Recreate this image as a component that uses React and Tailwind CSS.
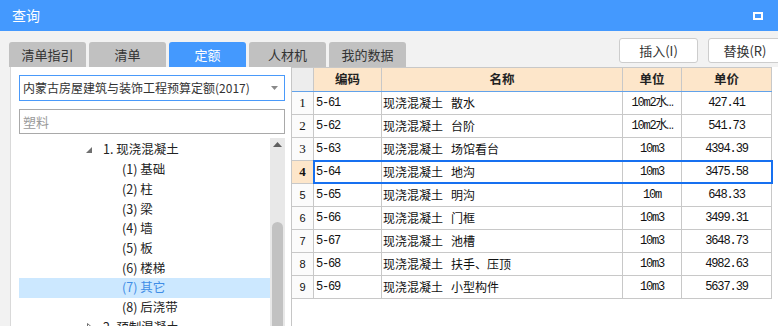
import React from 'react'

const CJK = { fontFamily: '"Noto Sans CJK SC", "Noto Sans", sans-serif' }

const tabs = ['清单指引', '清单', '定额', '人材机', '我的数据']

const tree = [
  { label: '1. 现浇混凝土', level: 0, open: true },
  { label: '(1) 基础', level: 1 },
  { label: '(2) 柱', level: 1 },
  { label: '(3) 梁', level: 1 },
  { label: '(4) 墙', level: 1 },
  { label: '(5) 板', level: 1 },
  { label: '(6) 楼梯', level: 1 },
  { label: '(7) 其它', level: 1, active: true },
  { label: '(8) 后浇带', level: 1 },
  { label: '2. 预制混凝土', level: 0, open: false },
]

const rows = [
  ['5-61', '散水', '10m2水…', '427.41'],
  ['5-62', '台阶', '10m2水…', '541.73'],
  ['5-63', '场馆看台', '10m3', '4394.39'],
  ['5-64', '地沟', '10m3', '3475.58'],
  ['5-65', '明沟', '10m', '648.33'],
  ['5-66', '门框', '10m3', '3499.31'],
  ['5-67', '池槽', '10m3', '3648.73'],
  ['5-68', '扶手、压顶', '10m3', '4982.63'],
  ['5-69', '小型构件', '10m3', '5637.39'],
]

const mono = { fontFamily: '"Liberation Mono", "Noto Sans CJK SC", monospace' }

function TreePanel() {
  return (
    <div className="w-[281px] shrink-0 bg-white border-l border-[#d9d9d9] pl-[8px] pr-[6px] pt-[8px] flex flex-col" style={CJK}>
      {/* quota library select */}
      <div className="h-[26px] border border-[#4a9afa] flex items-center pl-[3px] pr-[6px] text-[12px] text-[#333]">
        <span className="flex-1 whitespace-nowrap">内蒙古房屋建筑与装饰工程预算定额(2017)</span>
        <svg width="7" height="4" viewBox="0 0 7 4"><path d="M0 0h7L3.5 4z" fill="#8a8a8a" /></svg>
      </div>
      {/* search */}
      <div className="h-[25px] mt-[8px] border border-[#a9a9a9] flex items-center pl-[3px] text-[13px] text-[#9a9a9a]">
        塑料
      </div>
      {/* tree + scrollbar */}
      <div className="flex mt-[4px] flex-1 min-h-0">
        <div className="flex-1 pt-[2px]">
          {tree.map((n, i) => (
            <div
              key={i}
              className={`h-[19.7px] flex items-center text-[12.5px] whitespace-nowrap ${n.active ? 'bg-[#cce8ff] text-[#3f8de6]' : 'text-[#222]'}`}
            >
              {n.level === 0 ? (
                <>
                  <span className="w-[84px] shrink-0 flex justify-end pr-[11px]">
                    {n.open ? (
                      <svg width="6" height="6" viewBox="0 0 6 6"><path d="M6 0v6H0z" fill="#707070" /></svg>
                    ) : (
                      <svg width="5" height="8" viewBox="0 0 5 8"><path d="M0.5 0.5L4.5 4L0.5 7.5z" fill="none" stroke="#707070" /></svg>
                    )}
                  </span>
                  <span>{n.label}</span>
                </>
              ) : (
                <span className="pl-[103px]">{n.label}</span>
              )}
            </div>
          ))}
        </div>
        <div className="w-[15px] shrink-0 bg-[#e8e8e8] flex flex-col items-center pt-[4px]">
          <svg width="9" height="5" viewBox="0 0 9 5"><path d="M0 5h9L4.5 0z" fill="#5f5f5f" /></svg>
          <div className="mt-[75px] w-[11px] flex-1 bg-[#c2c2c2] rounded-t-[6px]" />
        </div>
      </div>
    </div>
  )
}

function QuotaTable() {
  return (
    <div className="flex-1 bg-white border-l border-[#c6c6c6]">
      <div className="w-[480px] border-t border-[#c8c8c8]">
        {/* header */}
        <div className="h-[24px] flex border-b border-[#62a2ea] text-[12.5px] font-bold text-[#222]" style={CJK}>
          <div className="w-[22px] bg-[#ededed] border-r border-[#c8c8c8]" />
          <div className="w-[68px] bg-[#fde6ca] border-r border-[#c8c8c8] flex items-center justify-center">编码</div>
          <div className="w-[241px] bg-[#fde6ca] border-r border-[#c8c8c8] flex items-center justify-center">名称</div>
          <div className="w-[59px] bg-[#fde6ca] border-r border-[#c8c8c8] flex items-center justify-center">单位</div>
          <div className="w-[90px] bg-[#fde6ca] border-r border-[#c8c8c8] flex items-center justify-center">单价</div>
        </div>
        {rows.map((r, i) => {
          const sel = i === 3
          return (
            <div key={i} className="relative h-[23px] flex border-b border-[#c8c8c8] text-[#111]">
              <div
                className={`w-[22px] shrink-0 border-r border-[#c8c8c8] flex items-center justify-center ${sel ? 'bg-[#fde6ca] font-bold' : 'bg-[#fbfbfb]'} ${i < 4 ? 'text-[13px]' : 'text-[11px]'}`}
                style={{ fontFamily: i < 4 ? '"Liberation Serif", serif' : '"Liberation Sans", sans-serif' }}
              >
                {i + 1}
              </div>
              <div className="w-[68px] shrink-0 border-r border-[#c8c8c8] flex items-center pl-[2px] text-[12px] tracking-[-1.2px]" style={mono}>{r[0]}</div>
              <div className="w-[241px] shrink-0 border-r border-[#c8c8c8] flex items-center gap-[8px] pl-[1px] text-[12px] whitespace-nowrap" style={CJK}>
                <span>现浇混凝土</span>
                <span>{r[1]}</span>
              </div>
              <div className="w-[59px] shrink-0 border-r border-[#c8c8c8] flex items-center justify-center text-[12px] tracking-[-1.2px] whitespace-nowrap" style={mono}>{r[2]}</div>
              <div className="w-[90px] shrink-0 border-r border-[#c8c8c8] flex items-center justify-center text-[12px] tracking-[-1.1px]" style={mono}>{r[3]}</div>
              {sel && <div className="absolute left-[21px] right-[-1px] top-[-1px] bottom-[-1px] border-2 border-[#1670f0] pointer-events-none" />}
            </div>
          )
        })}
      </div>
    </div>
  )
}

export default function App() {
  return (
    <div className="w-[778px] h-[326px] overflow-hidden bg-[#f2f2f2] flex flex-col" style={CJK}>
      {/* title bar */}
      <div className="h-[31px] shrink-0 bg-[#4499fe] flex items-center justify-between pl-[12px] pr-[15px]">
        <span className="text-white text-[14px]">查询</span>
        <div className="w-[10px] h-[8px] border-2 border-white bg-[#4499fe]" />
      </div>

      {/* tabs + action buttons */}
      <div className="h-[36px] shrink-0 flex items-end justify-between pl-[9px]">
        <div className="flex gap-[3px]">
          {tabs.map(t => (
            <div
              key={t}
              className={`w-[77px] h-[25px] rounded-t-[3px] flex items-center justify-center text-[13px] ${t === '定额' ? 'bg-[#4499fe] text-white' : 'bg-[#c1c1c1] text-[#333]'}`}
            >
              {t}
            </div>
          ))}
        </div>
        <div className="flex gap-[10px] self-start mt-[7px] -mr-[12px]">
          <button className="w-[79px] h-[25px] bg-white border border-[#cdcdcd] rounded-[3px] text-[13px] text-[#333]">插入(I)</button>
          <button className="w-[82px] h-[25px] bg-white border border-[#cdcdcd] rounded-[3px] text-[13px] text-[#333] pr-[8px]">替换(R)</button>
        </div>
      </div>

      {/* body */}
      <div className="flex flex-1 min-h-0 pl-[10px]">
        <TreePanel />
        <QuotaTable />
      </div>
    </div>
  )
}
